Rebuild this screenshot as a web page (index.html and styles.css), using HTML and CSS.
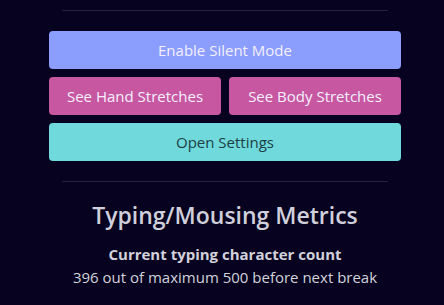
FILE: index.html
```html
<!DOCTYPE html>
<html lang="en">
<head>
  <meta charset="UTF-8">
  <meta name="viewport" content="width=device-width, initial-scale=1.0">
  <title>Break Timer</title>
  <link rel="stylesheet" href="styles.css">
</head>
<body>
  <div id="painel">
    <hr class="linha">

    <div id="botoes">
      <button class="btn silent">Enable Silent Mode</button>
      <div class="dupla">
        <button class="btn stretch">See Hand Stretches</button>
        <button class="btn stretch">See Body Stretches</button>
      </div>
      <button class="btn settings">Open Settings</button>
    </div>

    <hr class="linha">

    <h2 id="titulo">Typing/Mousing Metrics</h2>
    <div class="metrica">
      <strong>Current typing character count</strong>
      <span>396 out of maximum 500 before next break</span>
    </div>
  </div>
</body>
</html>
```

FILE: styles.css
```css
body{
  margin: 0px;
  padding: 0px;
  background-color: #07021f;
  font-family: "Open Sans", "Noto Sans", sans-serif;
  color: #d2d2dc;
  height: 305px;
  overflow: hidden;
}
#painel{
  width: 352px;
  margin-left: 49px;
  padding-top: 10px;
  text-align: center;
}
.linha{
  border: none;
  border-top: 1px solid #24203f;
  margin: 0px 13px;
  height: 0px;
}
#botoes{
  display: flex;
  flex-direction: column;
  gap: 8px;
  margin-top: 20px;
  margin-bottom: 20px;
}
.dupla{
  display: flex;
  gap: 8px;
}
.btn{
  height: 38px;
  border: none;
  border-radius: 4px;
  font-family: "Open Sans", "Noto Sans", sans-serif;
  font-size: 15px;
  color: #f4f0ff;
  cursor: pointer;
}
.silent{
  background-color: #8b9dfd;
}
.stretch{
  flex: 1;
  background-color: #c657a0;
}
.settings{
  background-color: #6fd9dc;
  color: #1d3f45;
}
#titulo{
  font-size: 23px;
  font-weight: 600;
  line-height: 28px;
  margin: 19px 0px 14px 0px;
  color: #d0d0dc;
}
.metrica{
  display: flex;
  flex-direction: column;
  font-size: 15px;
  line-height: 23px;
}
.metrica strong{
  font-weight: 700;
}
```
